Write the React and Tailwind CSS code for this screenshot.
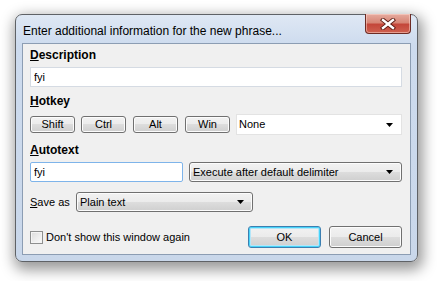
import { useState } from "react";

const btn =
    "h-[17px] border border-[#707070] rounded-[3px] bg-[linear-gradient(#f2f2f2_0%,#ebebeb_50%,#dddddd_50%,#cfcfcf_100%)] shadow-[inset_0_0_0_1px_#fcfcfc] text-[11px] text-black flex items-center justify-center";

const Arrow = () => (
    <svg width="7" height="4" viewBox="0 0 7 4" className="shrink-0">
        <path d="M0 0h7L3.5 4z" fill="#000" />
    </svg>
);

const Combo = ({ label, className }) => (
    <div
        className={`h-[20px] border border-[#707070] rounded-[3px] bg-[linear-gradient(#f2f2f2_0%,#ebebeb_50%,#dddddd_50%,#cfcfcf_100%)] shadow-[inset_0_0_0_1px_#fcfcfc] flex items-center pl-[3px] pr-[8px] ${className}`}
    >
        <span className="flex-1 text-[11px] text-black">{label}</span>
        <Arrow />
    </div>
);

const App = () => {
    const [desc, setDesc] = useState("fyi");
    const [auto, setAuto] = useState("fyi");
    const [noShow, setNoShow] = useState(false);

    return (
        <div className="w-[437px] h-[281px] bg-white overflow-hidden font-['Liberation_Sans',Arial,sans-serif] pt-[14px] pl-[15px]">
            {/* Ventana */}
            <div className="relative w-[403px] h-[248px] rounded-[7px] border border-[#5f6266] bg-[linear-gradient(#dfe8f4,#cddbee_30px,#c9d7ea)] shadow-[2px_5px_14px_3px_rgba(0,0,0,0.4)] flex flex-col px-[6px] pb-[6px]">
                {/* Barra de titulo */}
                <div className="h-[28px] flex items-center pl-[1px]">
                    <span className="text-[12px] text-black pt-[3px]">
                        Enter additional information for the new phrase...
                    </span>
                </div>
                <div className="absolute top-[-1px] right-[6px] w-[46px] h-[20px] rounded-b-[4px] border border-[#6d2b24] border-t-0 bg-[linear-gradient(#e6ab9f_0%,#d78676_45%,#c4473a_55%,#cf6150_100%)] shadow-[inset_0_0_0_1px_rgba(255,220,210,0.5)] flex items-center justify-center">
                    <svg width="16" height="12" viewBox="0 0 16 12">
                        <path d="M3 2l10 8M13 2L3 10" stroke="#5a1a12" strokeWidth="4.2" strokeLinecap="square" />
                        <path d="M3 2l10 8M13 2L3 10" stroke="#fff" strokeWidth="2.4" strokeLinecap="square" />
                    </svg>
                </div>

                {/* Area de cliente */}
                <div className="flex-1 border border-[#8c9db3] bg-[#f0f0f0] flex flex-col pl-[7px] pr-[8px] pt-[3px]">
                    <div className="h-[16px] flex items-center text-[12px] font-bold text-black">
                        <span><span className="underline">D</span>escription</span>
                    </div>
                    <input
                        value={desc}
                        onChange={(e) => setDesc(e.target.value)}
                        className="mt-[4px] h-[20px] border border-[#d5dbe3] bg-white px-[3px] text-[11px] text-black outline-none"
                    />

                    <div className="mt-[6px] h-[16px] flex items-center text-[12px] font-bold text-black">
                        <span><span className="underline">H</span>otkey</span>
                    </div>
                    <div className="mt-[5px] h-[21px] flex items-center">
                        <button className={`${btn} w-[45px]`}>Shift</button>
                        <button className={`${btn} w-[45px] ml-[6px]`}>Ctrl</button>
                        <button className={`${btn} w-[45px] ml-[7px]`}>Alt</button>
                        <button className={`${btn} w-[45px] ml-[7px]`}>Win</button>
                        <div className="ml-[6px] h-[21px] flex-1 border border-[#e3e3e3] bg-white flex items-center pl-[2px] pr-[8px]">
                            <span className="flex-1 text-[11px] text-black">None</span>
                            <Arrow />
                        </div>
                    </div>

                    <div className="mt-[7px] h-[16px] flex items-center text-[12px] font-bold text-black">
                        <span><span className="underline">A</span>utotext</span>
                    </div>
                    <div className="mt-[4px] h-[20px] flex items-center">
                        <input
                            value={auto}
                            onChange={(e) => setAuto(e.target.value)}
                            className="w-[153px] h-[20px] border border-[#7eb4ea] rounded-[2px] bg-white px-[3px] text-[11px] text-black outline-none"
                        />
                        <Combo label="Execute after default delimiter" className="ml-[6px] flex-1" />
                    </div>

                    <div className="mt-[10px] h-[20px] flex items-center">
                        <span className="w-[46px] text-[11px] text-black">
                            <span className="underline">S</span>ave as
                        </span>
                        <Combo label="Plain text" className="w-[177px]" />
                    </div>

                    <div className="mt-[14px] h-[22px] flex items-center">
                        <label className="flex items-center gap-[3px] flex-1">
                            <span
                                onClick={() => setNoShow(!noShow)}
                                className="w-[13px] h-[13px] border border-[#8e8f8f] bg-[linear-gradient(135deg,#dcdcdc,#fbfbfb)] shadow-[inset_0_0_0_1px_#f4f4f4] flex items-center justify-center text-[10px] leading-none"
                            >
                                {noShow ? "✓" : ""}
                            </span>
                            <span className="text-[11px] text-black">Don't show this window again</span>
                        </label>
                        <button className="w-[73px] h-[22px] border border-[#3c7fb1] rounded-[3px] bg-[linear-gradient(#f2f2f2_0%,#ebebeb_50%,#dddddd_50%,#cfcfcf_100%)] shadow-[inset_0_0_0_1px_#48d4f9,inset_0_0_0_2px_#b4e6f9] text-[11px] text-black">
                            OK
                        </button>
                        <button className="ml-[8px] w-[73px] h-[22px] border border-[#707070] rounded-[3px] bg-[linear-gradient(#f2f2f2_0%,#ebebeb_50%,#dddddd_50%,#cfcfcf_100%)] shadow-[inset_0_0_0_1px_#fcfcfc] text-[11px] text-black">
                            Cancel
                        </button>
                    </div>
                </div>
            </div>
        </div>
    );
};

export default App;
